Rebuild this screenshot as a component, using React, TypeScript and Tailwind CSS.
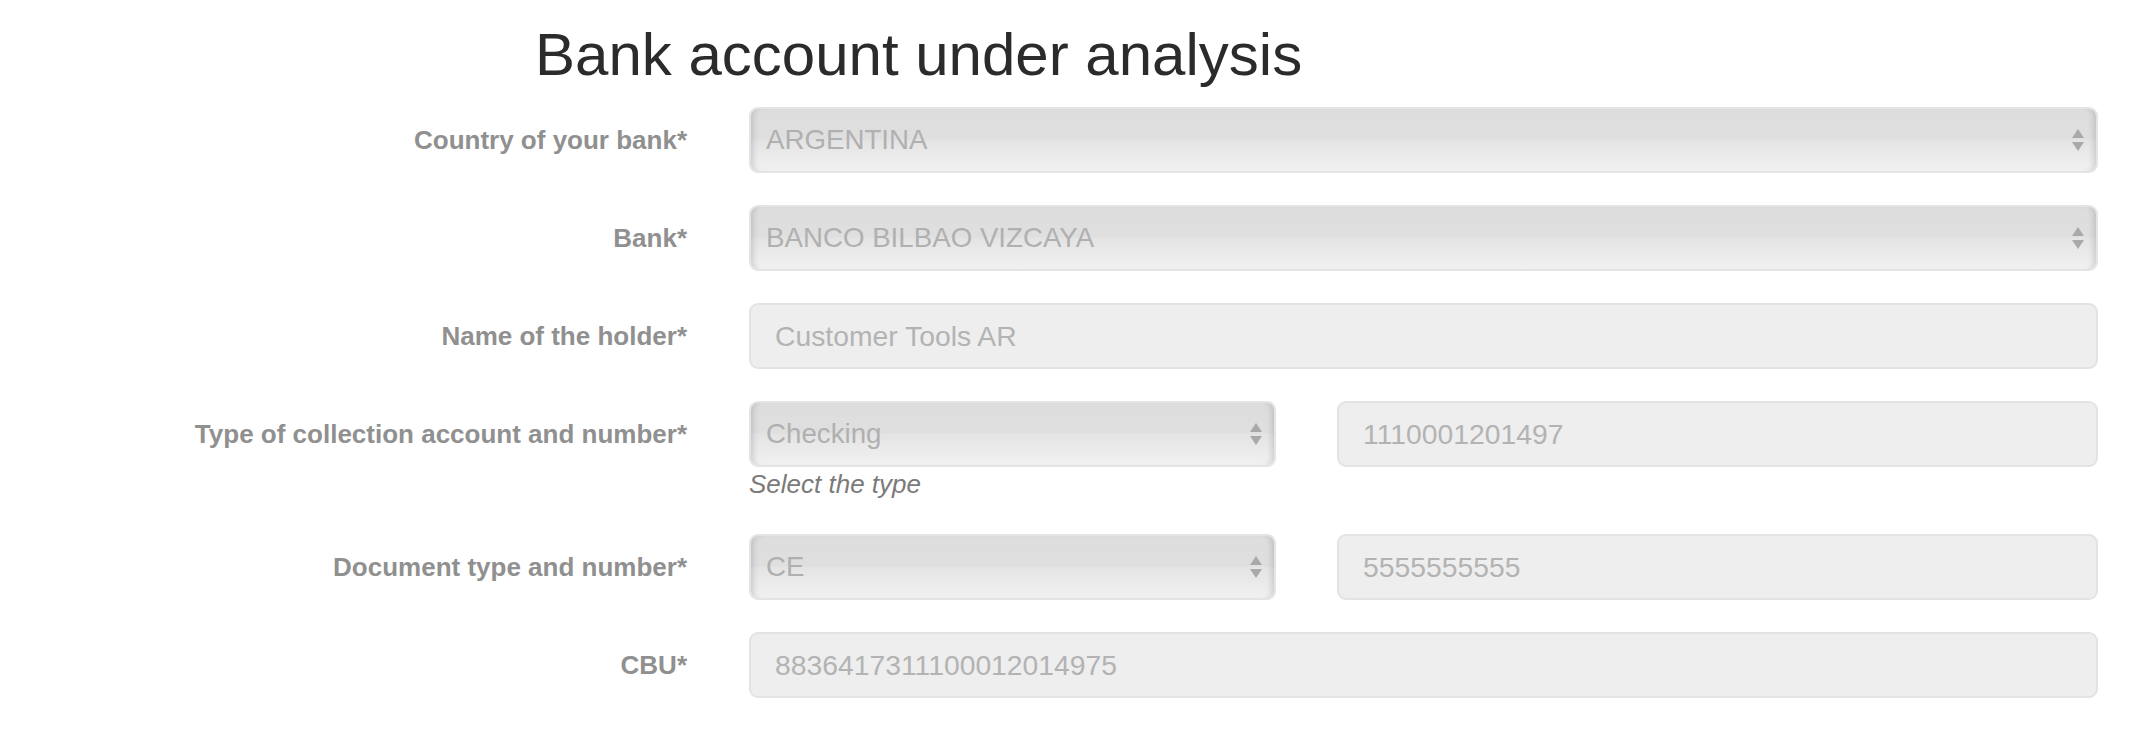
import React from "react";

// fake native select (disabled look)
function SelectBox({ value, className }: { value: string; className?: string }) {
  return (
    <div
      className={
        "relative flex h-[66px] items-center rounded-[9px] border-2 border-[#e4e4e4] bg-[linear-gradient(to_bottom,#dddddd_0%,#dfdfdf_48%,#e4e4e4_51%,#f1f1f1_100%)] pl-[15px] pr-[40px] shadow-[inset_7px_0_6px_-5px_rgba(0,0,0,0.15),inset_-7px_0_6px_-5px_rgba(0,0,0,0.15)] " +
        (className ?? "")
      }
    >
      <span className="text-[27.7px] text-[#b0b0b0]">{value}</span>
      <svg
        className="absolute right-[11px] top-1/2 -translate-y-1/2"
        width="14"
        height="26"
        viewBox="0 0 14 26"
      >
        <polygon points="1,11 7,2 13,11" fill="#a9a9a9" />
        <polygon points="1,15 7,24 13,15" fill="#a9a9a9" />
      </svg>
    </div>
  );
}

function TextBox({ value, className }: { value: string; className?: string }) {
  return (
    <div
      className={
        "flex h-[66px] items-center rounded-[9px] border-2 border-[#e3e3e3] bg-[#eeeeee] pl-[24px] " +
        (className ?? "")
      }
    >
      <span className="text-[28.3px] text-[#b3b3b3]">{value}</span>
    </div>
  );
}

function Row({ label, children }: { label: string; children: React.ReactNode }) {
  return (
    <div className="flex items-start">
      <div className="flex h-[66px] w-[687px] shrink-0 items-center justify-end">
        <span className="text-[26px] font-bold text-[#909090]">{label}</span>
      </div>
      <div className="ml-[62px] w-[1349px]">{children}</div>
    </div>
  );
}

export default function App() {
  return (
    <div className="min-h-screen w-full bg-white font-['Liberation_Sans',Arial,sans-serif]">
      <h1 className="ml-[535px] pt-[22px] text-[60px] leading-[66px] font-normal text-[#2b2b2b]">
        Bank account under analysis
      </h1>

      <div className="mt-[19px] flex flex-col gap-[32px]">
        <Row label="Country of your bank*">
          <SelectBox value="ARGENTINA" />
        </Row>
        <Row label="Bank*">
          <SelectBox value="BANCO BILBAO VIZCAYA" />
        </Row>
        <Row label="Name of the holder*">
          <TextBox value="Customer Tools AR" />
        </Row>
        <Row label="Type of collection account and number*">
          <div className="flex">
            <SelectBox value="Checking" className="w-[527px]" />
            <TextBox value="1110001201497" className="ml-[61px] flex-1" />
          </div>
          <div className="text-[26px] leading-[35px] italic text-[#7b7b7b]">Select the type</div>
        </Row>
        <Row label="Document type and number*">
          <div className="flex">
            <SelectBox value="CE" className="w-[527px]" />
            <TextBox value="5555555555" className="ml-[61px] flex-1" />
          </div>
        </Row>
        <Row label="CBU*">
          <TextBox value="8836417311100012014975" />
        </Row>
      </div>
    </div>
  );
}
